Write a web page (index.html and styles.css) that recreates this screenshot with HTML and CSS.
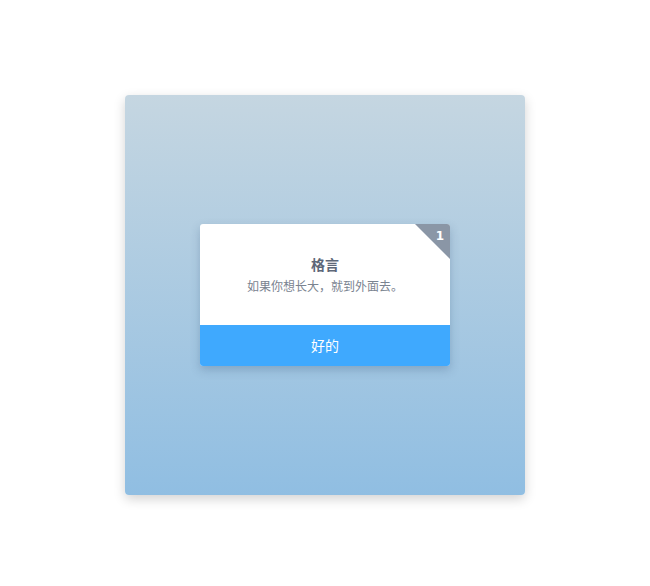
FILE: index.html
```html
<!DOCTYPE html>
<html>
<head>
<meta charset="utf-8">
<link rel="stylesheet" href="styles.css">
</head>
<body>
<div class="stage">
  <div class="panel">
    <div class="dialog">
      <svg class="corner" width="35" height="35" viewBox="0 0 35 35"><polygon points="0,0 35,0 35,35" fill="#8a96a6"/></svg>
      <span class="num">1</span>
      <div class="body">
        <div class="title">格言</div>
        <div class="text">如果你想长大，就到外面去。</div>
      </div>
      <div class="btn">好的</div>
    </div>
  </div>
</div>
</body>
</html>
```
FILE: styles.css
```css
html, body {
  margin: 0;
  padding: 0;
  background: #ffffff;
  font-family: "Noto Sans CJK SC", "Liberation Sans", sans-serif;
}
.stage {
  width: 650px;
  height: 586px;
  padding-top: 95px;
  padding-left: 125px;
  box-sizing: border-box;
}
.panel {
  width: 400px;
  height: 400px;
  border-radius: 4px;
  background: linear-gradient(to bottom, #c5d6e1, #90bee2);
  box-shadow: 0 4px 12px rgba(0, 0, 0, 0.18);
  display: flex;
  align-items: center;
  justify-content: center;
}
.dialog {
  position: relative;
  width: 250px;
  background: #ffffff;
  border-radius: 3px;
  overflow: hidden;
  box-shadow: 0 4px 10px rgba(40, 70, 110, 0.25);
}
.corner {
  position: absolute;
  top: 0;
  right: 0;
  display: block;
}
.num {
  position: absolute;
  top: 4px;
  right: 6px;
  color: #ffffff;
  font-family: "DejaVu Sans", sans-serif;
  font-weight: bold;
  font-size: 12px;
  line-height: 16px;
}
.body {
  height: 101px;
  box-sizing: border-box;
  padding-top: 30px;
  text-align: center;
}
.title {
  font-size: 14px;
  font-weight: bold;
  color: #5d6778;
  line-height: 20px;
}
.text {
  font-size: 12px;
  color: #7a8390;
  line-height: 20px;
  margin-top: 2px;
}
.btn {
  height: 41px;
  line-height: 41px;
  background: #3fa9fe;
  color: #ffffff;
  text-align: center;
  font-size: 14px;
}
```
